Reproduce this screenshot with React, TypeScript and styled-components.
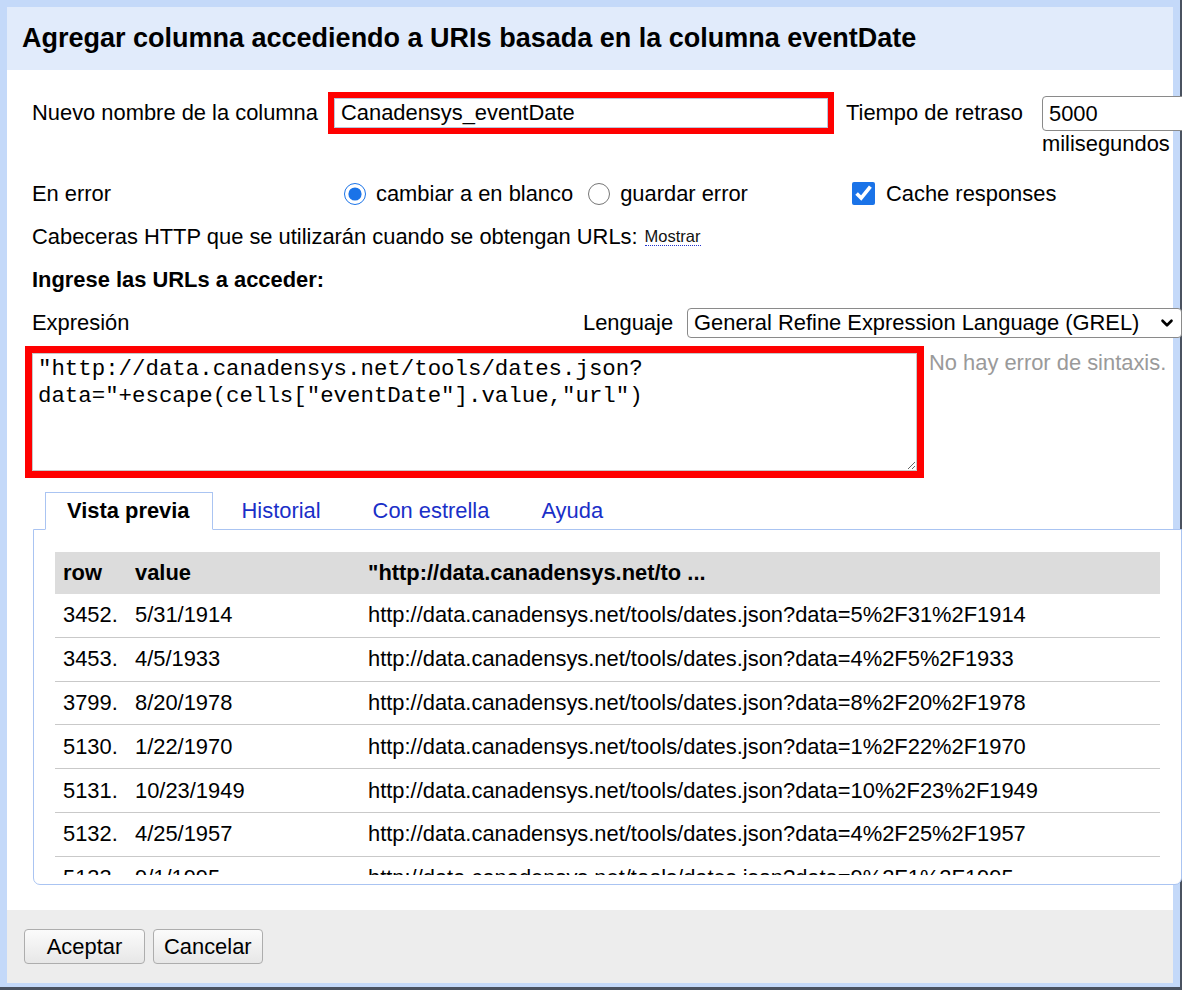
import styled, { createGlobalStyle } from 'styled-components';
import { ChevronDown } from 'lucide-react';

const GlobalStyle = createGlobalStyle`
  html, body {
    margin: 0;
    padding: 0;
    overflow: hidden;
  }
  body {
    font-family: 'Liberation Sans', Arial, sans-serif;
    color: #000;
  }
`;

const Frame = styled.div`
  box-sizing: border-box;
  width: 1182px;
  height: 990px;
  padding: 7px 7px 4px 7px;
  background: #c4d9f9;
  border-right: 2px solid #4a5260;
  border-bottom: 3px solid #4a5260;
  display: flex;
`;

const Dialog = styled.div`
  flex: 1;
  min-width: 0;
  display: flex;
  flex-direction: column;
`;

const Header = styled.div`
  flex-shrink: 0;
  height: 63px;
  display: flex;
  align-items: center;
  padding-left: 15px;
  background: #e1ebfb;
`;

const Title = styled.h1`
  margin: 0;
  font-size: 27px;
  font-weight: bold;
  white-space: nowrap;
`;

const Body = styled.div`
  flex: 1;
  min-width: 0;
  background: #fff;
  padding: 22px 0 0 18px;
  font-size: 21.9px;
`;

const Row = styled.div<{ $top?: number; $height?: number }>`
  display: flex;
  align-items: ${(p) => (p.$height ? 'center' : 'flex-start')};
  height: ${(p) => (p.$height ? `${p.$height}px` : 'auto')};
  margin-top: ${(p) => p.$top || 0}px;
  padding-left: 7px;
  white-space: nowrap;
`;

const Cell = styled.div<{ $width?: number; $line?: number; $indent?: number }>`
  box-sizing: border-box;
  flex-shrink: 0;
  width: ${(p) => (p.$width ? `${p.$width}px` : 'auto')};
  padding-left: ${(p) => p.$indent || 0}px;
  line-height: ${(p) => (p.$line ? `${p.$line}px` : 'normal')};
  display: flex;
  align-items: center;
`;

const RedFrame = styled.div<{ $width: number; $height: number; $border: number }>`
  box-sizing: border-box;
  flex-shrink: 0;
  display: flex;
  width: ${(p) => p.$width}px;
  height: ${(p) => p.$height}px;
  border: ${(p) => p.$border}px solid #ff0000;
`;

const NameInput = styled.input`
  flex: 1;
  min-width: 0;
  margin: 0;
  padding: 0 6px;
  border: 1px solid #b9c7dc;
  font: inherit;
  color: #000;
  outline: none;
`;

const DelayColumn = styled.div`
  flex-shrink: 0;
  padding-top: 4px;
  display: flex;
  flex-direction: column;
`;

const DelayInput = styled.input`
  box-sizing: border-box;
  width: 170px;
  height: 35px;
  margin: 0;
  padding: 0 6px;
  border: 1px solid #8a8a8a;
  border-radius: 4px;
  font: inherit;
  color: #000;
`;

const Unit = styled.span`
  line-height: 25px;
`;

const Choice = styled.label<{ $gap?: number }>`
  display: inline-flex;
  align-items: center;
  margin-left: ${(p) => p.$gap || 0}px;
  cursor: pointer;
`;

const Radio = styled.input.attrs({ type: 'radio' })`
  width: 22px;
  height: 22px;
  margin: 0 10px 0 0;
  accent-color: #1a73e8;
`;

const Check = styled.input.attrs({ type: 'checkbox' })`
  width: 23px;
  height: 23px;
  margin: 0 11px 0 0;
  accent-color: #1a73e8;
`;

const Toggle = styled.span`
  margin-left: 7px;
  font-size: 16.5px;
  color: #111;
  border-bottom: 1px dotted #2233cc;
  line-height: 18px;
  cursor: pointer;
`;

const Strong = styled.span`
  font-weight: bold;
`;

const SelectBox = styled.div`
  position: relative;
  flex-shrink: 0;
  width: 495px;
  height: 30px;
`;

const Select = styled.select`
  box-sizing: border-box;
  width: 100%;
  height: 100%;
  margin: 0;
  padding: 0 28px 0 6px;
  border: 1px solid #8a8a8a;
  border-radius: 4px;
  background: #fff;
  font: inherit;
  color: #000;
  appearance: none;
`;

const SelectArrow = styled.span`
  position: absolute;
  right: 6px;
  top: 6px;
  display: flex;
  pointer-events: none;
`;

const ExpressionRow = styled.div`
  display: flex;
  align-items: flex-start;
  margin-top: 2px;
`;

const Expression = styled.textarea`
  flex: 1;
  margin: 0;
  padding: 2px 5px;
  border: 1px solid #c8c8c8;
  font-family: 'Liberation Mono', 'Courier New', monospace;
  font-size: 22.4px;
  line-height: 27px;
  color: #000;
  outline: none;
  resize: both;
`;

const SyntaxStatus = styled.div`
  margin: 5px 0 0 5px;
  color: #9a9a9a;
  line-height: 24px;
  white-space: nowrap;
`;

const Tabs = styled.div`
  margin: 14px 0 0 8px;
  width: 1149px;
`;

const TabList = styled.div`
  position: relative;
  z-index: 1;
  display: flex;
  padding-left: 12px;
  margin-bottom: -1px;
`;

const Tab = styled.div<{ $active?: boolean }>`
  height: 36px;
  line-height: 36px;
  padding: 0 22px 0 21px;
  margin-right: 7px;
  border: 1px solid ${(p) => (p.$active ? '#aac4f2' : 'transparent')};
  border-bottom: 1px solid ${(p) => (p.$active ? '#fff' : 'transparent')};
  background: ${(p) => (p.$active ? '#fff' : 'transparent')};
  color: ${(p) => (p.$active ? '#000' : '#1a2fc8')};
  font-weight: ${(p) => (p.$active ? 'bold' : 'normal')};
  cursor: pointer;
`;

const Panel = styled.div`
  box-sizing: border-box;
  height: 356px;
  padding: 22px 21px 9px 21px;
  border: 1px solid #aac4f2;
  border-radius: 0 0 7px 7px;
  background: #fff;
`;

const Scroller = styled.div`
  height: 100%;
  overflow: hidden;
`;

const Table = styled.table`
  width: 1106px;
  border-collapse: collapse;
  font-size: 21.9px;
`;

const Th = styled.th<{ $width?: number }>`
  width: ${(p) => (p.$width ? `${p.$width}px` : 'auto')};
  height: 42px;
  padding: 0 0 0 8px;
  background: #dcdcdc;
  text-align: left;
  font-weight: bold;
  white-space: nowrap;
`;

const Td = styled.td`
  height: 42.8px;
  padding: 0 0 0 8px;
  border-bottom: 1px solid #c9c9c9;
  white-space: nowrap;
`;

const Footer = styled.div`
  flex-shrink: 0;
  height: 73px;
  display: flex;
  align-items: center;
  gap: 8px;
  padding-left: 17px;
  background: #ededed;
`;

const Button = styled.button<{ $width?: number }>`
  box-sizing: border-box;
  height: 35px;
  min-width: ${(p) => (p.$width ? `${p.$width}px` : '0')};
  padding: 0 10px;
  border: 1px solid #adadad;
  border-radius: 4px;
  background: linear-gradient(#fbfbfb, #e7e7e7);
  font-family: inherit;
  font-size: 21.9px;
  color: #000;
`;

const rows = [
  ['3452.', '5/31/1914', 'http://data.canadensys.net/tools/dates.json?data=5%2F31%2F1914'],
  ['3453.', '4/5/1933', 'http://data.canadensys.net/tools/dates.json?data=4%2F5%2F1933'],
  ['3799.', '8/20/1978', 'http://data.canadensys.net/tools/dates.json?data=8%2F20%2F1978'],
  ['5130.', '1/22/1970', 'http://data.canadensys.net/tools/dates.json?data=1%2F22%2F1970'],
  ['5131.', '10/23/1949', 'http://data.canadensys.net/tools/dates.json?data=10%2F23%2F1949'],
  ['5132.', '4/25/1957', 'http://data.canadensys.net/tools/dates.json?data=4%2F25%2F1957'],
  ['5133.', '9/1/1995', 'http://data.canadensys.net/tools/dates.json?data=9%2F1%2F1995'],
];

const expression =
  '"http://data.canadensys.net/tools/dates.json?data="+escape(cells["eventDate"].value,"url")';

const App = () => {
  return (
    <>
      <GlobalStyle />
      <Frame>
        <Dialog>
          <Header>
            <Title>Agregar columna accediendo a URIs basada en la columna eventDate</Title>
          </Header>
          <Body>
            <Row>
              <Cell $width={296} $line={42}>Nuevo nombre de la columna</Cell>
              <RedFrame $width={506} $height={42} $border={6}>
                <NameInput defaultValue="Canadensys_eventDate" />
              </RedFrame>
              <Cell $width={208} $line={42} $indent={12}>
                Tiempo de retraso
              </Cell>
              <DelayColumn>
                <DelayInput defaultValue="5000" />
                <Unit>milisegundos</Unit>
              </DelayColumn>
            </Row>

            <Row $top={16} $height={43}>
              <Cell $width={312}>En error</Cell>
              <Cell $width={508}>
                <Choice>
                  <Radio name="onError" defaultChecked />
                  cambiar a en blanco
                </Choice>
                <Choice $gap={15}>
                  <Radio name="onError" />
                  guardar error
                </Choice>
              </Cell>
              <Choice>
                <Check defaultChecked />
                Cache responses
              </Choice>
            </Row>

            <Row $height={43}>
              Cabeceras HTTP que se utilizarán cuando se obtengan URLs:
              <Toggle>Mostrar</Toggle>
            </Row>

            <Row $height={43}>
              <Strong>Ingrese las URLs a acceder:</Strong>
            </Row>

            <Row $height={43}>
              <Cell $width={551}>Expresión</Cell>
              <Cell $width={104}>Lenguaje</Cell>
              <SelectBox>
                <Select defaultValue="grel">
                  <option value="grel">General Refine Expression Language (GREL)</option>
                  <option value="python">Python / Jython</option>
                  <option value="clojure">Clojure</option>
                </Select>
                <SelectArrow>
                  <ChevronDown size={18} strokeWidth={3.5} />
                </SelectArrow>
              </SelectBox>
            </Row>

            <ExpressionRow>
              <RedFrame $width={899} $height={132} $border={7}>
                <Expression defaultValue={expression} spellCheck={false} />
              </RedFrame>
              <SyntaxStatus>No hay error de sintaxis.</SyntaxStatus>
            </ExpressionRow>

            <Tabs>
              <TabList>
                <Tab $active>Vista previa</Tab>
                <Tab>Historial</Tab>
                <Tab>Con estrella</Tab>
                <Tab>Ayuda</Tab>
              </TabList>
              <Panel>
                <Scroller>
                  <Table>
                    <thead>
                      <tr>
                        <Th $width={64}>row</Th>
                        <Th $width={225}>value</Th>
                        <Th>"http://data.canadensys.net/to ...</Th>
                      </tr>
                    </thead>
                    <tbody>
                      {rows.map(([row, value, url]) => (
                        <tr key={row}>
                          <Td>{row}</Td>
                          <Td>{value}</Td>
                          <Td>{url}</Td>
                        </tr>
                      ))}
                    </tbody>
                  </Table>
                </Scroller>
              </Panel>
            </Tabs>
          </Body>
          <Footer>
            <Button $width={121}>Aceptar</Button>
            <Button>Cancelar</Button>
          </Footer>
        </Dialog>
      </Frame>
    </>
  );
};

export default App;
